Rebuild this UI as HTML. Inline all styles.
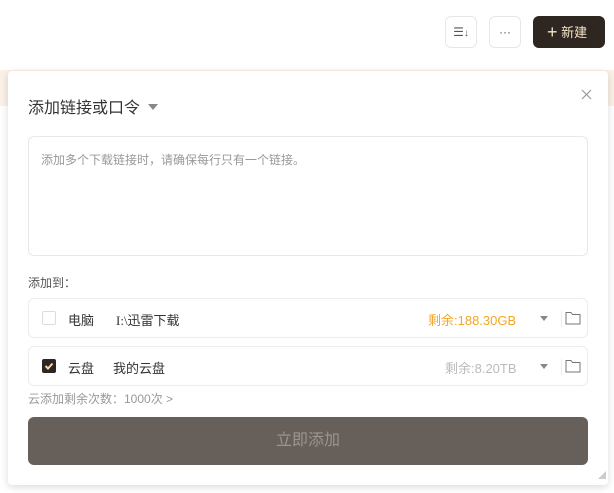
<!DOCTYPE html>
<html><head><meta charset="utf-8"><style>
*{box-sizing:border-box;margin:0;padding:0}
body{width:614px;height:493px;background:#fff;position:relative;overflow:hidden;font-family:"Liberation Sans","Noto Sans CJK SC",sans-serif;color:#333}
.band{position:absolute;left:0;top:70px;width:614px;height:36px;background:#faf0e6}
.btn{position:absolute;top:16px;height:32px;border:1px solid #e6e6e6;border-radius:6px;background:#fff;text-align:center;line-height:30px;font-size:12px;color:#555}
.new{position:absolute;left:533px;top:16px;width:72px;height:32px;background:#2d2621;border-radius:6px;color:#f5e3c6;font-size:13px;line-height:32px;padding-left:14px}
.dlg{position:absolute;left:8px;top:71px;width:600px;height:414px;background:#fff;border-radius:4px;box-shadow:0 2px 8px rgba(0,0,0,.15)}
.title{position:absolute;left:20px;top:23px;font-size:16px;color:#333}
.ta{position:absolute;left:20px;top:65px;width:560px;height:120px;border:1px solid #e8e8e8;border-radius:6px;font-size:12px;color:#999;padding:14px 12px}
.lbl{position:absolute;left:20px;top:203px;font-size:12px;color:#555}
.row{position:absolute;left:20px;width:560px;height:40px;border:1px solid #ececec;border-radius:6px;font-size:13px}
.row span{position:absolute;top:11px}
.cb{position:absolute;left:13px;top:12px;width:14px;height:14px;border:1px solid #ddd;border-radius:2px}
.cb.on{background:#2d2621;border-color:#2d2621}
.sep{position:absolute;left:532px;top:12px;width:1px;height:16px;background:#eee}
.tri{position:absolute;left:511px;top:17px;width:0;height:0;border-left:4px solid transparent;border-right:4px solid transparent;border-top:5px solid #888}
.sub{position:absolute;left:20px;top:319px;font-size:12px;color:#999}
.go{position:absolute;left:20px;top:346px;width:560px;height:48px;background:#675f59;border-radius:6px;color:#9c948e;font-size:16px;text-align:center;line-height:48px}
</style></head><body>
<div class="band"></div>
<div class="btn" style="left:445px;width:32px;color:#555">☰<span style="font-size:10px">↓</span></div>
<div class="btn" style="left:489px;width:32px">···</div>
<div class="new"><span style="font-size:18px;vertical-align:-1px">+</span> 新建</div>
<div class="dlg">
<div class="title">添加链接或口令 <span style="display:inline-block;width:0;height:0;border-left:5px solid transparent;border-right:5px solid transparent;border-top:6px solid #888;vertical-align:3px;margin-left:4px"></span></div>
<svg style="position:absolute;left:573px;top:18px" width="11" height="11" viewBox="0 0 11 11"><path d="M1 1l9 9M10 1l-9 9" stroke="#999" stroke-width="1.2"/></svg>
<div class="ta">添加多个下载链接时，请确保每行只有一个链接。</div>
<div class="lbl">添加到：</div>
<div class="row" style="top:227px"><div class="cb"></div><span style="left:39px">电脑</span><span style="left:87px;font-family:'Liberation Serif','Noto Sans CJK SC',serif">I:\迅雷下载</span><span style="left:399px;color:#f5a623">剩余:188.30GB</span><div class="tri"></div><div class="sep"></div>
<svg style="position:absolute;left:536px;top:12px" width="16" height="14" viewBox="0 0 16 14"><path d="M1 1.5h5l1.5 2H15v9.5H1z" fill="none" stroke="#777" stroke-width="1"/></svg></div>
<div class="row" style="top:275px"><div class="cb on"><svg width="12" height="12" viewBox="0 0 12 12"><path d="M2.5 6l2.5 2.5L9.5 3.5" fill="none" stroke="#f5d9a8" stroke-width="2"/></svg></div><span style="left:39px">云盘</span><span style="left:84px">我的云盘</span><span style="left:416px;color:#bbb">剩余:8.20TB</span><div class="tri"></div><div class="sep"></div>
<svg style="position:absolute;left:536px;top:12px" width="16" height="14" viewBox="0 0 16 14"><path d="M1 1.5h5l1.5 2H15v9.5H1z" fill="none" stroke="#777" stroke-width="1"/></svg></div>
<div class="sub">云添加剩余次数：1000次 &gt;</div>
<div class="go">立即添加</div>
<div style="position:absolute;left:590px;top:400px;width:0;height:0;border-left:8px solid transparent;border-bottom:8px solid #ccc"></div>
</div>
</body></html>
